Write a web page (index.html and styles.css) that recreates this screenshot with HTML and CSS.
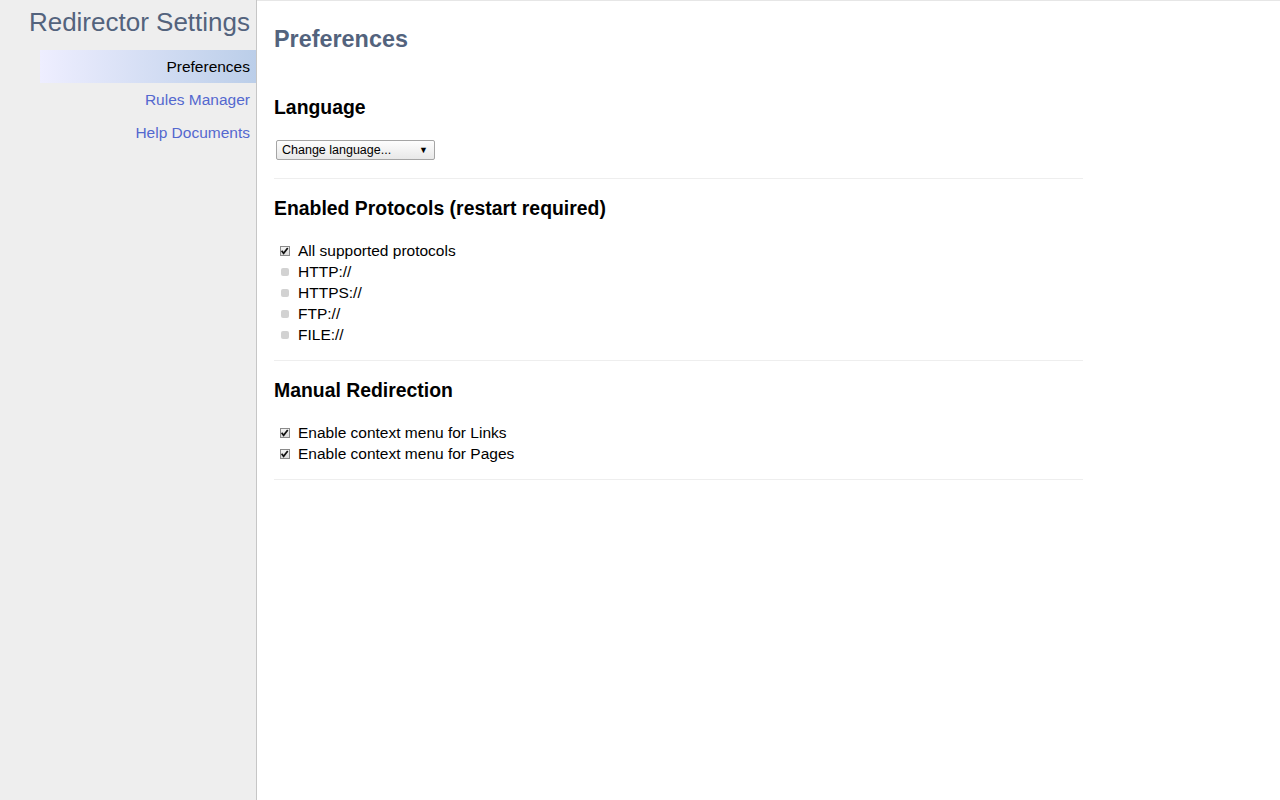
FILE: index.html
```html
<!DOCTYPE html>
<html>
<head>
<meta charset="utf-8">
<title>Redirector Settings</title>
<link rel="stylesheet" href="styles.css">
</head>
<body>
<div class="page">
  <nav class="sidebar">
    <h1 class="app-title">Redirector Settings</h1>
    <ul class="nav">
      <li class="nav-item selected">Preferences</li>
      <li class="nav-item">Rules Manager</li>
      <li class="nav-item">Help Documents</li>
    </ul>
  </nav>
  <main class="main">
    <h2 class="page-title">Preferences</h2>
    <section class="section">
      <h3 class="section-title">Language</h3>
      <div class="select-wrap">
        <div class="select"><span>Change language...</span><span class="arrow">&#9660;</span></div>
      </div>
    </section>
    <section class="section">
      <h3 class="section-title">Enabled Protocols (restart required)</h3>
      <div class="row"><span class="cb checked"><svg viewBox="0 0 10 10" width="10" height="10"><path d="M1.8 4.8 L4 7.6 L8.6 1.6" fill="none" stroke="#111" stroke-width="1.9"/></svg></span><span>All supported protocols</span></div>
      <div class="row"><span class="cb disabled"></span><span>HTTP://</span></div>
      <div class="row"><span class="cb disabled"></span><span>HTTPS://</span></div>
      <div class="row"><span class="cb disabled"></span><span>FTP://</span></div>
      <div class="row"><span class="cb disabled"></span><span>FILE://</span></div>
    </section>
    <section class="section">
      <h3 class="section-title">Manual Redirection</h3>
      <div class="row"><span class="cb checked"><svg viewBox="0 0 10 10" width="10" height="10"><path d="M1.8 4.8 L4 7.6 L8.6 1.6" fill="none" stroke="#111" stroke-width="1.9"/></svg></span><span>Enable context menu for Links</span></div>
      <div class="row"><span class="cb checked"><svg viewBox="0 0 10 10" width="10" height="10"><path d="M1.8 4.8 L4 7.6 L8.6 1.6" fill="none" stroke="#111" stroke-width="1.9"/></svg></span><span>Enable context menu for Pages</span></div>
    </section>
  </main>
</div>
</body>
</html>
```
FILE: styles.css
```css
html, body {
  margin: 0;
  padding: 0;
  height: 100%;
}
body {
  font-family: "Liberation Sans", Arial, sans-serif;
  background: #fff;
  color: #000;
}
.page {
  display: flex;
  height: 800px;
}
.sidebar {
  width: 256px;
  flex: none;
  background: #eeeeee;
  border-right: 1px solid #c6c6c6;
}
.app-title {
  margin: 0;
  padding: 6px 6px 0 0;
  height: 50px;
  box-sizing: border-box;
  text-align: right;
  font-size: 26px;
  font-weight: normal;
  line-height: 32px;
  color: #53637d;
}
.nav {
  list-style: none;
  margin: 0;
  padding: 0;
  padding-left: 40px;
}
.nav-item {
  height: 33px;
  line-height: 33px;
  padding-right: 6px;
  text-align: right;
  font-size: 15.5px;
  color: #5468cf;
}
.nav-item.selected {
  color: #000;
  background: linear-gradient(to right, #eeeeff, #bbcee9);
}
.main {
  flex: 1;
  border-top: 1px solid #e6e6e6;
  padding-left: 17px;
}
.page-title {
  margin: 23px 0 24px;
  font-size: 23.4px;
  line-height: 30px;
  font-weight: bold;
  color: #53637d;
}
.section {
  width: 809px;
  padding: 18px 0 16px;
  border-bottom: 1px solid #eeeeee;
}
.section-title {
  margin: 0 0 20px;
  font-size: 19.4px;
  line-height: 22px;
  font-weight: bold;
  color: #000;
}
.select-wrap {
  padding: 2px 0 2px 2px;
}
.select {
  width: 159px;
  height: 20px;
  box-sizing: border-box;
  border: 1px solid #a5a5a5;
  border-radius: 2px;
  background: linear-gradient(#fdfdfd, #e8e8e8);
  display: flex;
  align-items: center;
  justify-content: space-between;
  padding: 0 6px 0 5px;
  font-size: 12.5px;
  color: #000;
}
.arrow {
  font-size: 9px;
}
.row {
  display: flex;
  align-items: center;
  height: 21px;
  padding-top: 1px;
  margin-bottom: -1px;
  padding-left: 6px;
  font-size: 15.5px;
}
.cb {
  width: 10px;
  height: 10px;
  box-sizing: border-box;
  margin-right: 8px;
  flex: none;
  display: flex;
}
.cb.checked {
  border: 1px solid #8a8a8a;
  background: linear-gradient(#f4f4f4, #dcdcdc);
}
.cb.checked svg {
  margin: -1px 0 0 -1px;
  width: 10px;
  height: 10px;
}
.cb.disabled {
  width: 8px;
  height: 8px;
  margin-left: 1px;
  margin-right: 9px;
  border-radius: 2px;
  background: #d2d2d2;
}
```
